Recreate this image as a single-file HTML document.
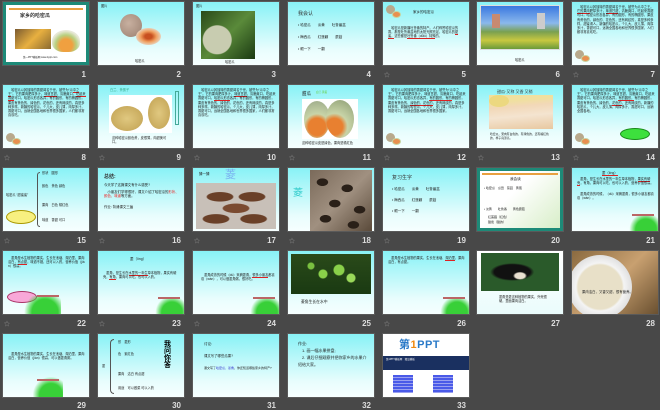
<!DOCTYPE html>
<html><head><meta charset="utf-8">
<style>
*{margin:0;padding:0;box-sizing:border-box}
body{width:660px;height:410px;background:#484848;position:relative;overflow:hidden;font-family:"Liberation Sans","Noto Sans CJK SC",sans-serif}
.s{position:absolute;width:86px;height:63px;overflow:hidden;background:linear-gradient(#88f2f6,#e8fdfd 75%,#f6ffff);box-shadow:0 0 0 1px #5a5a5a}
.n{position:absolute;width:86px;text-align:right;font-size:8px;font-weight:bold;color:#ddd;padding-right:3px}
.st{position:absolute;font-size:6px;color:#999;left:1px}
.a{position:absolute}
.tx{position:absolute;font-size:3.2px;line-height:4.2px;color:#222;word-break:break-all}
.ul{border-bottom:0.6px solid #d22}
.melon{position:absolute;width:9px;height:9px;border-radius:50%;background:#b8a98c}
.half{position:absolute;width:9px;height:7px;border-radius:50%;background:#e89050;border:1.5px solid #c8d4a0}
.grn{position:absolute;right:0;bottom:0;width:30px;height:16px;background:radial-gradient(circle at 60% 90%,#38d038 45%,transparent 72%)}
.isl{position:absolute;right:4px;bottom:15px;width:22px;height:2px;background:#b66}
.h{position:absolute;font-size:5px;color:#333}
</style></head><body>

<!-- Row 1 -->
<div class="s" style="left:3px;top:2px;background:#fff;border:3px solid #1d8a78">
 <div class="a" style="left:3px;top:3px;right:3px;height:2px;background:#e8a040"></div>
 <div class="h" style="left:14px;top:7px;font-weight:bold;font-size:5px">家乡的哈密瓜</div>
 <div class="a" style="left:9px;top:24px;width:36px;height:20px;background:linear-gradient(135deg,#7a5a30,#e8b040 50%,#8a6a30)"></div>
 <div class="a" style="left:46px;top:25px;width:28px;height:22px;border-radius:50% 50% 40% 40%;background:radial-gradient(circle at 50% 70%,#f0a040 30%,#b8d080 50%,#e8e8d8 70%)"></div>
 <div class="tx" style="left:17px;top:51px;font-size:2.5px">第一PPT模板网 www.1ppt.com</div>
</div>
<div class="n" style="left:3px;top:70px">1</div>

<div class="s" style="left:98px;top:2px">
 <div class="tx" style="left:3px;top:2px">图片</div>
 <div class="a" style="left:22px;top:12px;width:22px;height:23px;border-radius:50%;background:radial-gradient(circle at 40% 40%,#c8b0a0,#9a8070)"></div>
 <div class="a" style="left:38px;top:26px;width:25px;height:17px;border-radius:50%;background:radial-gradient(#c85020 20%,#f0a060 45%,#e8d0b8 70%)"></div>
 <div class="tx" style="left:37px;top:57px">哈密瓜</div>
</div>
<div class="n" style="left:98px;top:70px">2</div>

<div class="s" style="left:193px;top:2px">
 <div class="tx" style="left:3px;top:2px">图片</div>
 <div class="a" style="left:8px;top:9px;width:54px;height:48px;background:radial-gradient(circle at 30% 60%,#c8ccb0 0 14px,transparent 15px),linear-gradient(135deg,#2a4a1a,#5a8a3a 50%,#1a3a12)"></div>
 <div class="tx" style="left:32px;top:58px">哈密瓜</div>
</div>
<div class="n" style="left:193px;top:70px">3</div>

<div class="s" style="left:288px;top:2px">
 <div class="h" style="left:10px;top:8px">我会认</div>
 <div class="tx" style="left:10px;top:21px;font-size:3.5px">• 哈密瓜　　淡黄　　吐鲁番盆</div>
 <div class="tx" style="left:10px;top:33px;font-size:3.5px">• 梅西瓜　　红莲藕　　蘑菇</div>
 <div class="tx" style="left:10px;top:45px;font-size:3.5px">• 眼一下　　一翻</div>
</div>
<div class="n" style="left:288px;top:70px">4</div>

<div class="s" style="left:383px;top:2px">
 <div class="melon" style="left:3px;top:3px"></div><div class="half" style="left:9px;top:9px"></div>
 <div class="tx" style="left:30px;top:8px;font-size:3.5px">家乡的哈密瓜</div>
 <div class="tx" style="left:5px;top:24px;width:76px">　哈密瓜是新疆吐鲁番的特产。人们称赞哈密瓜的香，那是吐鲁番盆地的太阳光照充足，哈密瓜的<span class="ul">甜蜜，</span>这些都是<span class="ul">吐鲁番（dūlǔ）特殊</span>的。</div>
</div>
<div class="n" style="left:383px;top:70px">5</div>
<div class="st" style="left:384px;top:70px">☆</div>

<div class="s" style="left:477px;top:2px">
 <div class="a" style="left:3px;top:3px;width:80px;height:45px;border:1px solid #ddd;background:linear-gradient(#3a78e0,#8ab8ec 40%,#7aa050 60%,#c8c840 80%,#6a9a3a)"></div>
 <div class="a" style="left:15px;top:12px;width:8px;height:14px;background:#c88a70"></div>
 <div class="a" style="left:60px;top:11px;width:8px;height:16px;background:#ccc"></div>
 <div class="tx" style="left:38px;top:56px">哈密瓜</div>
</div>
<div class="n" style="left:477px;top:70px">6</div>

<div class="s" style="left:572px;top:2px">
 <div class="tx" style="left:5px;top:3px;width:78px">　哈密瓜以其独特的香甜闻名于世，被誉为瓜中之王。<span class="ul">它的果肉</span>肥厚多汁，<span class="ul">味道甘甜</span>，清脆爽口，吃起来香甜可口。哈密瓜形态各异，有的圆形，有的椭圆形，果皮有黄色的、绿色的、花色的，还有网纹的，真是多种多样，甜蜜诱人。新疆的哈密瓜，个儿大，皮儿薄，肉厚多汁，香甜可口，远销全国各地和世界很多国家，人们都非常喜欢吃。</div>
 <div class="melon" style="left:3px;top:48px"></div><div class="half" style="left:9px;top:53px"></div>
</div>
<div class="n" style="left:572px;top:70px">7</div>
<div class="st" style="left:573px;top:70px">☆</div>

<!-- Row 2 -->
<div class="s" style="left:3px;top:85px">
 <div class="tx" style="left:5px;top:3px;width:78px">　哈密瓜以其独特的香甜闻名于世，被誉为“瓜<span class="ul">中之王</span>”。它的果肉肥厚多汁，<span class="ul">味道甘甜</span>，清脆爽口，<span class="ul">吃起来香甜</span>可口。哈密瓜形态各异，有的圆形，有的椭圆形，果皮有黄色的、绿色的、花色的，还有网纹的，真是多种多样。新疆的哈密瓜，个儿大，皮儿薄，肉厚多汁，香甜可口，远销全国各地和世界很多国家，人们都非常喜欢吃。</div>
 <div class="melon" style="left:3px;top:48px"></div><div class="half" style="left:9px;top:53px"></div>
</div>
<div class="n" style="left:3px;top:153px">8</div>
<div class="st" style="left:4px;top:153px">☆</div>

<div class="s" style="left:98px;top:85px">
 <div class="tx" style="left:12px;top:3px;color:#3a8">白兰、黄蛋子</div>
 <div class="a" style="left:11px;top:10px;width:63px;height:38px;background:#fff"></div>
 <div class="a" style="left:13px;top:21px;width:32px;height:25px;border-radius:50%;background:radial-gradient(#e0c880,#c0a050)"></div>
 <div class="a" style="left:50px;top:12px;width:22px;height:32px;border-radius:50%;background:radial-gradient(#e0c880,#c0a050)"></div>
 <div class="a" style="left:77px;top:6px;width:4px;height:34px;border:0.5px solid #4a9"></div>
 <div class="tx" style="left:14px;top:51px;width:56px">这种哈密瓜颜色黄，皮很薄，肉甜美可口。</div>
</div>
<div class="n" style="left:98px;top:153px">9</div>
<div class="st" style="left:99px;top:153px">☆</div>

<div class="s" style="left:193px;top:85px">
 <div class="tx" style="left:5px;top:3px;width:78px">　哈密瓜以其独特的香甜闻名于世，被誉为“瓜中之王”。它的果肉肥厚多汁，<span class="ul">味道甘甜</span>，清脆爽口，吃起来香甜可口。<span class="ul">哈密瓜形态</span>各异，有的圆形，有的椭圆形，果皮有黄色的、绿色的、花色的，还有网纹的，真是多种多样。新疆的哈密瓜，个儿大，皮儿薄，肉厚多汁，香甜可口，远销全国各地和世界很多国家，人们都非常喜欢吃。</div>
</div>
<div class="n" style="left:193px;top:153px">10</div>
<div class="st" style="left:194px;top:153px">☆</div>

<div class="s" style="left:288px;top:85px">
 <div class="tx" style="left:14px;top:7px;font-size:4.5px">甜瓜</div><div class="tx" style="left:28px;top:6px;color:#6c3;font-size:2.6px">白兰·黄蛋</div>
 <div class="a" style="left:14px;top:14px;width:56px;height:40px;background:#fff"></div>
 <div class="a" style="left:16px;top:16px;width:26px;height:37px;border-radius:50%;background:radial-gradient(circle at 50% 70%,#e88030 30%,#c8d4a8 45%,#9aa888)"></div>
 <div class="a" style="left:38px;top:15px;width:28px;height:38px;border-radius:50%;background:radial-gradient(circle at 30% 70%,#e88030 25%,#c8d4a8 40%,#8a9a70)"></div>
 <div class="tx" style="left:14px;top:56px">这种哈密瓜皮是绿色，果肉是橘红色</div>
</div>
<div class="n" style="left:288px;top:153px">11</div>
<div class="st" style="left:289px;top:153px">☆</div>

<div class="s" style="left:383px;top:85px">
 <div class="tx" style="left:5px;top:3px;width:78px">　哈密瓜以其独特的香甜闻名于世，被誉为“瓜中之王”。它的果肉肥厚多汁，味道甘甜，清脆爽口，吃起来香甜可口。哈密瓜形态各异，<span class="ul">有的圆形，有的</span>椭圆形，果皮有黄色的、<span class="ul">绿色的、花色的</span>，还有网纹的，真是多种多样。新疆的哈密瓜，个儿大，皮儿薄，肉厚多汁，香甜可口，远销全国各地和世界很多国家。</div>
 <div class="melon" style="left:3px;top:48px"></div><div class="half" style="left:9px;top:53px"></div>
</div>
<div class="n" style="left:383px;top:153px">12</div>
<div class="st" style="left:384px;top:153px">☆</div>

<div class="s" style="left:477px;top:85px">
 <div class="h" style="left:20px;top:4px;font-size:4px">甜瓜·又称 又香 又稍</div>
 <div class="a" style="left:12px;top:10px;width:64px;height:34px;background:linear-gradient(175deg,#f0e0a0 20%,#f2d8b8 35%,#f4e4d0 60%,#e8c8a0)"></div>
 <div class="a" style="left:12px;top:10px;width:20px;height:12px;border-radius:50%;background:#ecd880"></div>
 <div class="tx" style="left:13px;top:47px;width:62px;font-size:2.8px">哈密瓜，果肉有白色的，有绿色的，还有橘红色的，样子真漂亮。</div>
</div>
<div class="n" style="left:477px;top:153px">13</div>
<div class="st" style="left:478px;top:153px">☆</div>

<div class="s" style="left:572px;top:85px">
 <div class="tx" style="left:5px;top:3px;width:78px">　哈密瓜以其独特的香甜闻名于世，被誉为“瓜中之王”。它的果肉肥厚多汁，味道甘甜，清脆爽口，吃起来香甜可口。哈密瓜形态各异，<span class="ul">有的圆形，</span>有的椭圆形，果皮有黄色的、绿色的、<span class="ul">花色的</span>，还有网纹的。新疆的哈密瓜，个儿大，皮儿薄，肉厚多汁，香甜可口，远销全国各地。</div>
 <div class="melon" style="left:3px;top:48px"></div><div class="half" style="left:9px;top:53px"></div>
 <div class="a" style="left:48px;top:43px;width:30px;height:12px;border-radius:50%;background:#3de03d;border:0.5px solid #1a8a1a"></div>
</div>
<div class="n" style="left:572px;top:153px">14</div>
<div class="st" style="left:573px;top:153px">☆</div>

<!-- Row 3 -->
<div class="s" style="left:3px;top:168px">
 <div class="tx" style="left:3px;top:25px">哈密瓜 “甜蜜蜜”</div>
 <div class="a" style="left:34px;top:4px;width:3px;height:55px;border:0.6px solid #555;border-right:none;border-radius:3px 0 0 3px"></div>
 <div class="tx" style="left:39px;top:3px">形状　圆形</div>
 <div class="tx" style="left:39px;top:16px">颜色　黄色 绿色</div>
 <div class="tx" style="left:39px;top:35px">果肉　白色 橘红色</div>
 <div class="tx" style="left:39px;top:50px">味道　香甜 可口</div>
 <div class="a" style="left:3px;top:42px;width:30px;height:14px;border-radius:50%;background:#f8f080;border:0.5px solid #a90"></div>
</div>
<div class="n" style="left:3px;top:236px">15</div>
<div class="st" style="left:4px;top:236px">☆</div>

<div class="s" style="left:98px;top:168px">
 <div class="h" style="left:6px;top:5px;font-weight:bold">总结:</div>
 <div class="tx" style="left:6px;top:15px;font-size:3.4px">今天学了这篇课文有什么感受?</div>
 <div class="tx" style="left:6px;top:22px;width:76px;font-size:3.4px">　小朋友们学得很好，课文介绍了哈密瓜的<span style="color:#e22">形状、颜色、味道</span>等方面。</div>
 <div class="tx" style="left:6px;top:37px;font-size:3.4px">作业: 背诵课文三遍</div>
</div>
<div class="n" style="left:98px;top:236px">16</div>
<div class="st" style="left:99px;top:236px">☆</div>

<div class="s" style="left:193px;top:168px">
 <div class="tx" style="left:6px;top:4px;font-size:3.5px">猜一猜</div>
 <div class="a" style="left:32px;top:-2px;font-size:11px;color:#7ab0f0">菱</div>
 <div class="a" style="left:3px;top:15px;width:80px;height:46px;background:radial-gradient(ellipse 14px 5px at 30% 30%,#6a4028 90%,transparent),radial-gradient(ellipse 14px 5px at 70% 30%,#6a4028 90%,transparent),radial-gradient(ellipse 14px 5px at 50% 55%,#7a4a30 90%,transparent),radial-gradient(ellipse 14px 5px at 25% 78%,#6a4028 90%,transparent),radial-gradient(ellipse 14px 5px at 72% 78%,#6a4028 90%,transparent),#c8c0b8"></div>
</div>
<div class="n" style="left:193px;top:236px">17</div>
<div class="st" style="left:194px;top:236px">☆</div>

<div class="s" style="left:288px;top:168px">
 <div class="a" style="left:5px;top:16px;font-size:10px;color:#3cc">菱</div>
 <div class="a" style="left:22px;top:2px;width:62px;height:61px;background:radial-gradient(ellipse 6px 4px at 20% 20%,#2a2018 90%,transparent),radial-gradient(ellipse 6px 4px at 60% 30%,#2a2018 90%,transparent),radial-gradient(ellipse 6px 4px at 40% 55%,#2a2018 90%,transparent),radial-gradient(ellipse 6px 4px at 80% 65%,#2a2018 90%,transparent),radial-gradient(ellipse 6px 4px at 25% 80%,#2a2018 90%,transparent),radial-gradient(ellipse 6px 4px at 70% 90%,#2a2018 90%,transparent),linear-gradient(135deg,#7a6a5a,#a09080 50%,#5a4a3a)"></div>
</div>
<div class="n" style="left:288px;top:236px">18</div>
<div class="st" style="left:289px;top:236px">☆</div>

<div class="s" style="left:383px;top:168px">
 <div class="h" style="left:9px;top:6px">复习生字</div>
 <div class="tx" style="left:9px;top:19px;font-size:3.5px">• 哈密瓜　　淡黄　　吐鲁番盆</div>
 <div class="tx" style="left:9px;top:30px;font-size:3.5px">• 梅西瓜　　红莲藕　　蘑菇</div>
 <div class="tx" style="left:9px;top:41px;font-size:3.5px">• 眼一下　　一翻</div>
</div>
<div class="n" style="left:383px;top:236px">19</div>
<div class="st" style="left:384px;top:236px">☆</div>

<div class="s" style="left:477px;top:168px;background:linear-gradient(135deg,#fff 40%,#d8eec8);border:3px solid #1d8a78">
 <div class="a" style="left:2px;top:2px;right:2px;height:1.5px;background:#e8a040"></div>
 <div class="tx" style="left:30px;top:6px;font-size:3.6px">我会读</div>
 <div class="tx" style="left:4px;top:15px;font-size:3px">• 哈密瓜　瓜田　菜园　黄蛋</div>
 <div class="tx" style="left:4px;top:36px;font-size:3px">• 淡黄　　吐鲁番　　黄色蘑菇</div>
 <div class="tx" style="left:8px;top:44px;font-size:3px">红莲藕（红色）</div>
 <div class="tx" style="left:8px;top:49px;font-size:3px">甜蜜（甜的）</div>
</div>
<div class="n" style="left:477px;top:236px">20</div>

<div class="s" style="left:572px;top:168px">
 <div class="tx" style="left:30px;top:3px;font-size:3.4px"><span class="ul">菱（líng）</span></div>
 <div class="tx" style="left:5px;top:9px;width:78px">　菱角，是生长在水里的一年生草本植物，<span class="ul">果实有硬壳</span>，有角，果肉可以吃，也可以入药，营养价值很高。</div>
 <div class="tx" style="left:5px;top:24px;width:78px">　菱角成熟的时候，（dú）采摘菱角，很多小朋友都喜欢（wán）。</div>
 <div class="grn"></div><div class="isl"></div>
</div>
<div class="n" style="left:572px;top:236px">21</div>

<!-- Row 4 -->
<div class="s" style="left:3px;top:251px">
 <div class="tx" style="left:5px;top:5px;width:78px">　菱角是水生植物的果实，生长在池塘、湖泊里，果肉洁白，<span class="ul">有点甜</span>，味道不错，还可以入药，营养价值（jiàn）很高。</div>
 <div class="a" style="left:4px;top:40px;width:30px;height:12px;border-radius:50%;background:#f8a8d8;border:0.5px solid #a36"></div>
 <div class="grn" style="width:40px;height:18px;right:28px"></div><div class="isl" style="right:30px;bottom:17px"></div>
</div>
<div class="n" style="left:3px;top:319px">22</div>
<div class="st" style="left:4px;top:319px">☆</div>

<div class="s" style="left:98px;top:251px">
 <div class="tx" style="left:32px;top:6px;font-size:3.5px">菱（líng）</div>
 <div class="tx" style="left:5px;top:20px;width:78px">　菱角，是生长在<span class="ul">水里的一年生</span>草本植物，果实有硬壳，<span class="ul">有角</span>，果肉可以吃，也可以入药。</div>
 <div class="grn"></div><div class="isl"></div>
</div>
<div class="n" style="left:98px;top:319px">23</div>
<div class="st" style="left:99px;top:319px">☆</div>

<div class="s" style="left:193px;top:251px">
 <div class="tx" style="left:8px;top:22px;width:74px">　菱角成熟的时候（dú）采摘菱角，<span class="ul">很多小朋友</span>都喜欢（wán），可以做菱角粥，很好吃。</div>
 <div class="grn"></div><div class="isl"></div>
</div>
<div class="n" style="left:193px;top:319px">24</div>
<div class="st" style="left:194px;top:319px">☆</div>

<div class="s" style="left:288px;top:251px">
 <div class="a" style="left:3px;top:3px;width:80px;height:40px;background:radial-gradient(circle at 40% 50%,#8ad04a 0 4px,transparent 5px),radial-gradient(circle at 60% 40%,#8ad04a 0 5px,transparent 6px),radial-gradient(circle at 75% 60%,#9ad85a 0 4px,transparent 5px),radial-gradient(circle at 25% 30%,#7ac040 0 3px,transparent 4px),linear-gradient(#2a4a1a,#1a3a12)"></div>
 <div class="tx" style="left:13px;top:49px;font-size:3.8px">菱角生长在水中</div>
</div>
<div class="n" style="left:288px;top:319px">25</div>

<div class="s" style="left:383px;top:251px">
 <div class="tx" style="left:5px;top:5px;width:78px">　菱角是水生植物的果实，生长在池塘、<span class="ul">湖泊里</span>，果肉洁白，有点甜。</div>
 <div class="grn"></div><div class="isl"></div>
</div>
<div class="n" style="left:383px;top:319px">26</div>
<div class="st" style="left:384px;top:319px">☆</div>

<div class="s" style="left:477px;top:251px;background:linear-gradient(#fff,#eafcfc)">
 <div class="a" style="left:4px;top:2px;width:78px;height:38px;background:radial-gradient(ellipse at 50% 60%,#e8e0d0 0 5px,transparent 7px),radial-gradient(ellipse at 40% 50%,#111 0 18px,transparent 22px),#2a5a2a"></div>
 <div class="tx" style="left:22px;top:44px;width:50px">菱角是菱这种植物的果实，外壳很硬，里面果肉洁白。</div>
</div>
<div class="n" style="left:477px;top:319px">27</div>

<div class="s" style="left:572px;top:251px;background:linear-gradient(135deg,#8a6a40,#c8a070 50%,#6a5030)">
 <div class="a" style="left:-4px;top:4px;width:64px;height:64px;border-radius:50%;background:radial-gradient(circle,#e8e0c8 0 22px,#f4f4f4 24px,#e0e0e0 32px)"></div>
 <div class="tx" style="left:10px;top:39px;font-size:3.4px">果肉洁白，又香又甜，很有营养。</div>
</div>
<div class="n" style="left:572px;top:319px">28</div>

<!-- Row 5 -->
<div class="s" style="left:3px;top:334px">
 <div class="tx" style="left:5px;top:18px;width:78px">　菱角是水生植物的果实，生长在池塘、湖泊里，果肉洁白，营养价值（jiàn）很高，可以做菱角粥。</div>
 <div class="grn" style="width:30px;height:20px;right:26px"></div><div class="isl" style="right:30px;bottom:16px"></div>
</div>
<div class="n" style="left:3px;top:402px;line-height:8px">29</div>

<div class="s" style="left:98px;top:334px">
 <div class="a" style="left:12px;top:5px;width:4px;height:55px;border:0.6px solid #555;border-right:none;border-radius:4px 0 0 4px"></div>
 <div class="tx" style="left:4px;top:30px">菱</div>
 <div class="tx" style="left:20px;top:6px">形　菱形</div>
 <div class="tx" style="left:20px;top:18px">色　紫红色</div>
 <div class="tx" style="left:20px;top:38px">果肉　洁白 有点甜</div>
 <div class="tx" style="left:20px;top:52px">用途　可以做菜 可以入药</div>
 <div class="a" style="left:66px;top:7px;width:10px;font-size:7px;line-height:7px;font-weight:bold;color:#000">我问你答</div>
</div>
<div class="n" style="left:98px;top:402px;line-height:8px">30</div>

<div class="s" style="left:193px;top:334px">
 <div class="tx" style="left:11px;top:8px;font-size:3.6px">讨论:</div>
 <div class="tx" style="left:11px;top:20px;font-size:3.4px">课文写了哪些瓜果?</div>
 <div class="tx" style="left:11px;top:32px;width:70px;font-size:3px">课文写了<span style="color:#33c">哈密瓜、菱角</span>，你还知道哪些家乡的特产?</div>
</div>
<div class="n" style="left:193px;top:402px;line-height:8px">31</div>

<div class="s" style="left:288px;top:334px">
 <div class="tx" style="left:10px;top:6px;font-size:4px;line-height:7px;width:70px">作业:<br>　1. 画一幅水果拼盘;<br>　2. 课后仔细观察并把你家乡的水果介绍给大家。</div>
</div>
<div class="n" style="left:288px;top:402px;line-height:8px">32</div>

<div class="s" style="left:383px;top:334px;background:#fff">
 <div class="a" style="left:16px;top:2px;font-size:11px;font-weight:bold;color:#2a7ac8;letter-spacing:0.5px">第<span style="color:#f08a10">1</span>PPT</div>
 <div class="a" style="left:0;top:22px;width:86px;height:14px;background:#1a3060"></div>
 <div class="tx" style="left:3px;top:24px;color:#fff;font-size:2.5px">第1PPT模板网　精品模板</div>
 <div class="a" style="left:10px;top:41px;width:20px;height:18px;background:repeating-linear-gradient(#4a5ae8 0 2px,#9aa0f0 2px 3px)"></div>
 <div class="a" style="left:50px;top:41px;width:20px;height:18px;background:repeating-linear-gradient(#4a5ae8 0 2px,#9aa0f0 2px 3px)"></div>
</div>
<div class="n" style="left:383px;top:402px;line-height:8px">33</div>

</body></html>
